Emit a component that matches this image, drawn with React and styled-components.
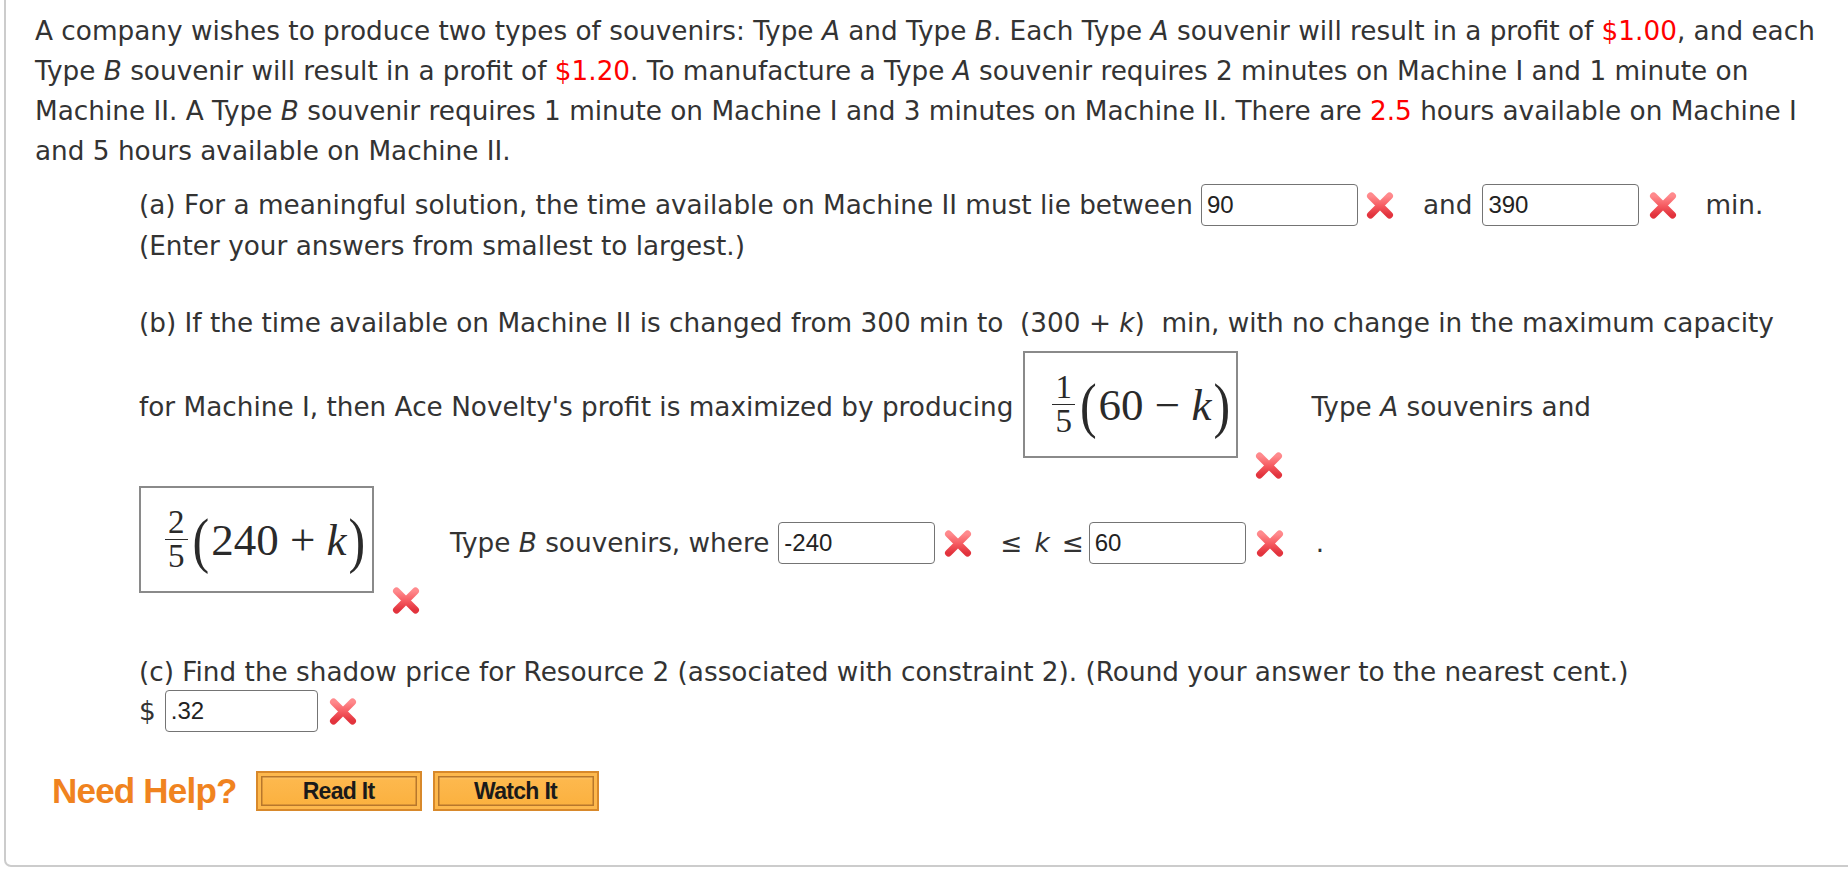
import React from "react";
import styled, { createGlobalStyle } from "styled-components";

const GlobalStyle = createGlobalStyle`
  html, body {
    margin: 0;
    padding: 0;
    background: #fff;
  }
  body {
    font-family: "DejaVu Sans", Verdana, sans-serif;
    color: #333;
    overflow: hidden;
  }
`;

const Panel = styled.div`
  margin-left: 4px;
  width: 1850px;
  box-sizing: border-box;
  border: 2px solid #ccc;
  border-top: none;
  border-radius: 0 0 7px 7px;
  padding: 11px 0 54px 29px;
  font-size: 26.3px;
  line-height: 40px;
`;

const Intro = styled.p`
  margin: 0;
  white-space: nowrap;
`;

const Red = styled.span`
  color: #f00;
`;

const Part = styled.div`
  padding-left: 104px;
`;

const Line = styled.div`
  margin-top: ${(p) => p.$top || 0}px;
  white-space: nowrap;
`;

const Row = styled.div`
  display: flex;
  align-items: ${(p) => p.$align || "center"};
  margin-top: ${(p) => p.$top || 0}px;
  white-space: nowrap;
`;

const Text = styled.span`
  margin-top: ${(p) => p.$top || 0}px;
  margin-left: ${(p) => p.$left || 0}px;
  margin-right: ${(p) => p.$right || 0}px;
`;

const Answer = styled.div`
  box-sizing: border-box;
  width: ${(p) => p.$w || 157}px;
  height: 42px;
  margin-left: ${(p) => p.$left || 0}px;
  border: 1.5px solid #747474;
  border-radius: 4px;
  background: #fff;
  padding: 0 5px;
  font-family: "Liberation Sans", Arial, sans-serif;
  font-size: 24px;
  line-height: 39px;
  color: #222;
`;

const Cross = styled.span`
  display: inline-flex;
  margin-top: ${(p) => p.$top || 0}px;
  margin-left: ${(p) => p.$left || 0}px;
`;

const Rel = styled.span`
  margin: 0 ${(p) => p.$gap || 0}px;
`;

const MathBox = styled.div`
  box-sizing: border-box;
  width: ${(p) => p.$w}px;
  height: 107px;
  border: 2px solid #8a8a8a;
  padding-left: ${(p) => p.$pad}px;
  display: flex;
  align-items: center;
  font-family: "Liberation Serif", "Times New Roman", serif;
  color: #2a2a2a;
`;

const Frac = styled.span`
  display: inline-flex;
  flex-direction: column;
  align-items: center;
  font-size: 33px;
  line-height: 33px;
  margin-right: 5px;
`;

const Num = styled.span`
  align-self: stretch;
  text-align: center;
  padding: 0 3px;
  border-bottom: 1.5px solid #2a2a2a;
`;

const Den = styled.span``;

const Paren = styled.span`
  display: inline-block;
  font-size: 50px;
  line-height: 50px;
  transform: scaleY(1.22);
`;

const Expr = styled.span`
  font-size: 45px;
  line-height: 50px;
  padding: 0 2px;

  i {
    font-style: italic;
  }
`;

const HelpRow = styled.div`
  display: flex;
  align-items: center;
  margin-top: 39px;
  margin-left: 17px;
`;

const NeedHelp = styled.span`
  font-family: "Liberation Sans", Arial, sans-serif;
  font-weight: bold;
  font-size: 35px;
  letter-spacing: -0.8px;
  color: #f0831f;
  margin-right: 19px;
`;

const HelpButton = styled.button`
  box-sizing: border-box;
  width: 166px;
  height: 40px;
  margin-right: 11px;
  border: 2px solid #d8892b;
  background: linear-gradient(#fdd491 0%, #fdb84d 20%, #fbb03d 100%);
  box-shadow: inset 0 0 0 3px #fdb84d, inset 0 0 0 4.5px #b7772c;
  font-family: "Liberation Sans", Arial, sans-serif;
  font-weight: bold;
  font-size: 23px;
  letter-spacing: -0.7px;
  color: #1a1a1a;
  padding: 0;
  cursor: pointer;
`;

const XMark = () => (
  <svg width="30" height="29" viewBox="0 0 30 29">
    <defs>
      <linearGradient id="xgrad" x1="0" y1="0" x2="0" y2="1">
        <stop offset="0" stopColor="#ff8a8d" />
        <stop offset="0.5" stopColor="#f65c62" />
        <stop offset="1" stopColor="#e2333d" />
      </linearGradient>
    </defs>
    <path
      d="M5.5 5 L24.5 24 M24.5 5 L5.5 24"
      stroke="url(#xgrad)"
      strokeWidth="7"
      strokeLinecap="round"
      fill="none"
    />
  </svg>
);

const Fraction = ({ n, d, children }) => (
  <>
    <Frac>
      <Num>{n}</Num>
      <Den>{d}</Den>
    </Frac>
    <Paren>(</Paren>
    <Expr>{children}</Expr>
    <Paren>)</Paren>
  </>
);

export default function App() {
  return (
    <>
      <GlobalStyle />
      <Panel>
        <Intro>
          A company wishes to produce two types of souvenirs: Type <i>A</i> and
          Type <i>B</i>. Each Type <i>A</i> souvenir will result in a profit of{" "}
          <Red>$1.00</Red>, and each
          <br />
          Type <i>B</i> souvenir will result in a profit of <Red>$1.20</Red>. To
          manufacture a Type <i>A</i> souvenir requires 2 minutes on Machine I
          and 1 minute on
          <br />
          Machine II. A Type <i>B</i> souvenir requires 1 minute on Machine I and
          3 minutes on Machine II. There are <Red>2.5</Red> hours available on
          Machine I
          <br />
          and 5 hours available on Machine II.
        </Intro>

        <Part>
          <Row $top={13}>
            <Text $right={8}>
              (a) For a meaningful solution, the time available on Machine II
              must lie between
            </Text>
            <Answer>90</Answer>
            <Cross $left={7}>
              <XMark />
            </Cross>
            <Text $left={28}>and</Text>
            <Answer $left={10}>390</Answer>
            <Cross $left={9}>
              <XMark />
            </Cross>
            <Text $left={27}>min.</Text>
          </Row>
          <Line>(Enter your answers from smallest to largest.)</Line>

          <Line $top={37}>
            (b) If the time available on Machine II is changed from 300 min to
            &nbsp;(300 + <i>k</i>)&nbsp; min, with no change in the maximum
            capacity
          </Line>
          <Row $align="flex-start" $top={8}>
            <Text $top={36} $right={10}>
              for Machine I, then Ace Novelty's profit is maximized by producing
            </Text>
            <MathBox $w={215} $pad={27}>
              <Fraction n="1" d="5">
                60 − <i>k</i>
              </Fraction>
            </MathBox>
            <Cross $top={100} $left={16}>
              <XMark />
            </Cross>
            <Text $top={36} $left={27}>
              Type <i>A</i> souvenirs and
            </Text>
          </Row>
          <Row $align="flex-start" $top={6}>
            <MathBox $w={235} $pad={24}>
              <Fraction n="2" d="5">
                240 + <i>k</i>
              </Fraction>
            </MathBox>
            <Cross $top={100} $left={17}>
              <XMark />
            </Cross>
            <Row $top={36}>
              <Text $left={29} $right={9}>
                Type <i>B</i> souvenirs, where
              </Text>
              <Answer>-240</Answer>
              <Cross $left={8}>
                <XMark />
              </Cross>
              <Text $left={27} $right={5}>
                ≤<Rel $gap={12}>
                  <i>k</i>
                </Rel>
                ≤
              </Text>
              <Answer>60</Answer>
              <Cross $left={9}>
                <XMark />
              </Cross>
              <Text $left={31}>.</Text>
            </Row>
          </Row>

          <Line $top={37}>
            (c) Find the shadow price for Resource 2 (associated with constraint
            2). (Round your answer to the nearest cent.)
          </Line>
          <Row $top={-2}>
            <Text $right={9}>$</Text>
            <Answer $w={153}>.32</Answer>
            <Cross $left={10}>
              <XMark />
            </Cross>
          </Row>
        </Part>

        <HelpRow>
          <NeedHelp>Need Help?</NeedHelp>
          <HelpButton>Read It</HelpButton>
          <HelpButton>Watch It</HelpButton>
        </HelpRow>
      </Panel>
    </>
  );
}
